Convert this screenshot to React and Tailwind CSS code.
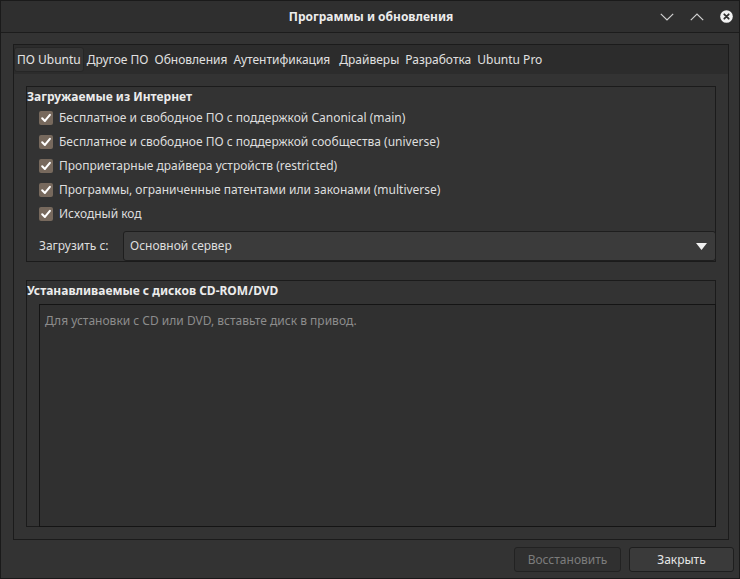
import React from "react";

function Check() {
  return (
    <span className="w-[14px] h-[14px] rounded-[2px] bg-[#77695d] flex items-center justify-center shrink-0">
      <svg width="12" height="12" viewBox="0 0 12 12">
        <path d="M2.2 6.3 L4.9 8.9 L9.9 2.9" stroke="#ffffff" strokeWidth="2.1" fill="none" strokeLinecap="round" strokeLinejoin="round" />
      </svg>
    </span>
  );
}

const tabs = ["ПО Ubuntu", "Другое ПО", "Обновления", "Аутентификация", "Драйверы", "Разработка", "Ubuntu Pro"];

const checks = [
  "Бесплатное и свободное ПО с поддержкой Canonical (main)",
  "Бесплатное и свободное ПО с поддержкой сообщества (universe)",
  "Проприетарные драйвера устройств (restricted)",
  "Программы, ограниченные патентами или законами (multiverse)",
  "Исходный код",
];

export default function App() {
  return (
    <div className="w-[740px] h-[579px] bg-[#333333] border border-[#1a1a1a] flex flex-col font-['Noto_Sans','Open_Sans',sans-serif] text-[12px] text-[#dedede] overflow-hidden">
      {/* Title bar */}
      <div className="h-[32px] shrink-0 bg-[#2f2f2f] border-b border-[#1c1c1c] grid grid-cols-[1fr_auto_1fr] items-center">
        <div />
        <div className="font-bold text-[#ececec] text-[12px] pl-[2px]">Программы и обновления</div>
        <div className="flex items-center justify-end gap-[16px] pr-[6px]">
          <svg width="14" height="8" viewBox="0 0 14 8">
            <path d="M0.8 0.8 L7 7 L13.2 0.8" stroke="#d0d0d0" strokeWidth="1.2" fill="none" />
          </svg>
          <svg width="14" height="8" viewBox="0 0 14 8">
            <path d="M0.8 7.2 L7 1 L13.2 7.2" stroke="#d0d0d0" strokeWidth="1.2" fill="none" />
          </svg>
          <svg width="13" height="13" viewBox="0 0 13 13">
            <circle cx="6.5" cy="6.5" r="6.3" fill="#f2f2f2" />
            <path d="M4.3 4.3 L8.7 8.7 M8.7 4.3 L4.3 8.7" stroke="#2f2f2f" strokeWidth="1.8" strokeLinecap="round" />
          </svg>
        </div>
      </div>

      {/* Main */}
      <div className="flex-1 flex flex-col pl-[12px] pr-[10px] pt-[11px]">
        <div className="flex-1 border border-[#1b1b1b] flex flex-col">
          {/* Tab bar */}
          <div className="h-[29px] bg-[#2c2c2c] flex items-start pt-[2px] shrink-0">
            {tabs.map((t, i) => (
              <div
                key={t}
                className={
                  i === 0
                    ? "h-[25px] px-[2px] flex items-center rounded-[3px] bg-[#343434] border border-[#262626] text-[#e4e4e4]"
                    : i === 3
                    ? "h-[25px] px-[3px] pr-[6px] flex items-center text-[#e0e0e0]"
                    : "h-[25px] px-[3px] flex items-center text-[#e0e0e0]"
                }
              >
                {t}
              </div>
            ))}
          </div>

          {/* Content */}
          <div className="flex-1 flex flex-col px-[12px] pt-[12px] pb-[12px] gap-[18px]">
            {/* Frame 1 */}
            <div className="h-[176px] border border-[#1b1b1b] flex flex-col shrink-0">
              <div className="h-[19px] flex items-center font-bold text-[#ececec]">Загружаемые из Интернет</div>
              <div className="flex flex-col pl-[12px]">
                {checks.map((c) => (
                  <div key={c} className="h-[24px] flex items-center gap-[6px]">
                    <Check />
                    <span>{c}</span>
                  </div>
                ))}
              </div>
              <div className="mt-[5px] h-[30px] flex items-center pl-[12px]">
                <span className="w-[84px]">Загрузить с:</span>
                <div className="flex-1 h-[30px] -mr-[1px] rounded-[3px] bg-[#3b3b3b] border border-[#1e1e1e] flex items-center justify-between pl-[6px] pr-[8px]">
                  <span>Основной сервер</span>
                  <svg width="11" height="7" viewBox="0 0 11 7">
                    <path d="M0 0 H11 L5.5 7 Z" fill="#f0f0f0" />
                  </svg>
                </div>
              </div>
            </div>

            {/* Frame 2 */}
            <div className="flex-1 border border-[#1b1b1b] flex flex-col">
              <div className="h-[23px] pt-[1px] flex items-start font-bold text-[#ececec] leading-[18px]">
                Устанавливаемые с дисков CD-ROM/DVD
              </div>
              <div className="flex-1 ml-[12px] -mr-[1px] -mb-[1px] bg-[#303030] border border-[#141414] px-[5px] pt-[7px] text-[#8c8c8c]">
                Для установки с CD или DVD, вставьте диск в привод.
              </div>
            </div>
          </div>
        </div>
      </div>

      {/* Buttons */}
      <div className="h-[38px] shrink-0 flex items-center justify-end gap-[8px] pr-[5px] pt-[1px]">
        <div className="w-[107px] h-[25px] rounded-[3px] bg-[#303030] border border-[#222222] flex items-center justify-center text-[#7c7c7c]">
          Восстановить
        </div>
        <div className="w-[105px] h-[25px] rounded-[3px] bg-[#3a3a3a] border border-[#1e1e1e] flex items-center justify-center text-[#e6e6e6]">
          Закрыть
        </div>
      </div>
    </div>
  );
}
